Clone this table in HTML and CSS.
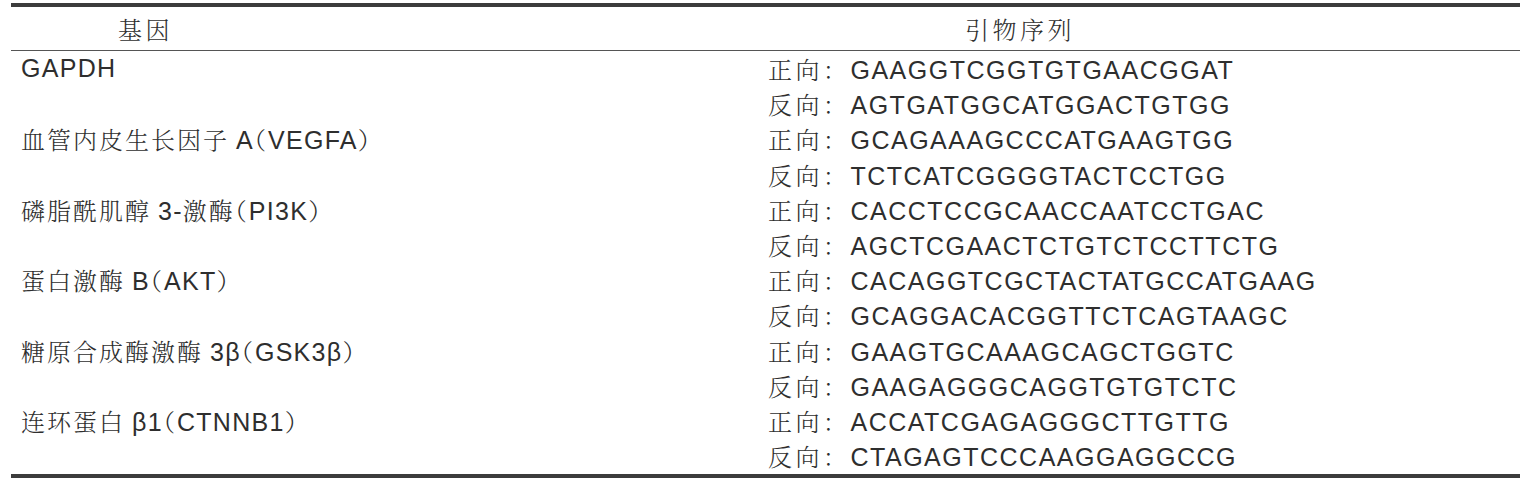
FILE: index.html
```html
<!DOCTYPE html>
<html lang="zh">
<head>
<meta charset="utf-8">
<link rel="stylesheet" href="styles.css">
</head>
<body>
<div class="table">
  <div class="head">
    <div class="h1 cn">基因</div>
    <div class="h2 cn">引物序列</div>
  </div>
  <div class="body">
    <div class="gene">GAPDH</div>
    <div class="primers">
      <div class="line"><span class="cn">正向：</span><span class="seq">GAAGGTCGGTGTGAACGGAT</span></div>
      <div class="line"><span class="cn">反向：</span><span class="seq">AGTGATGGCATGGACTGTGG</span></div>
    </div>

    <div class="gene"><span class="cn gap">血管内皮生长因子</span>A<span class="cn p">（</span>VEGFA<span class="cn p">）</span></div>
    <div class="primers">
      <div class="line"><span class="cn">正向：</span><span class="seq">GCAGAAAGCCCATGAAGTGG</span></div>
      <div class="line"><span class="cn">反向：</span><span class="seq">TCTCATCGGGGTACTCCTGG</span></div>
    </div>

    <div class="gene"><span class="cn gap">磷脂酰肌醇</span>3-<span class="cn">激酶</span><span class="cn p">（</span>PI3K<span class="cn p">）</span></div>
    <div class="primers">
      <div class="line"><span class="cn">正向：</span><span class="seq">CACCTCCGCAACCAATCCTGAC</span></div>
      <div class="line"><span class="cn">反向：</span><span class="seq">AGCTCGAACTCTGTCTCCTTCTG</span></div>
    </div>

    <div class="gene"><span class="cn gap">蛋白激酶</span>B<span class="cn p">（</span>AKT<span class="cn p">）</span></div>
    <div class="primers">
      <div class="line"><span class="cn">正向：</span><span class="seq">CACAGGTCGCTACTATGCCATGAAG</span></div>
      <div class="line"><span class="cn">反向：</span><span class="seq">GCAGGACACGGTTCTCAGTAAGC</span></div>
    </div>

    <div class="gene"><span class="cn gap">糖原合成酶激酶</span>3β<span class="cn p">（</span>GSK3β<span class="cn p">）</span></div>
    <div class="primers">
      <div class="line"><span class="cn">正向：</span><span class="seq">GAAGTGCAAAGCAGCTGGTC</span></div>
      <div class="line"><span class="cn">反向：</span><span class="seq">GAAGAGGGCAGGTGTGTCTC</span></div>
    </div>

    <div class="gene"><span class="cn gap">连环蛋白</span>β1<span class="cn p">（</span>CTNNB1<span class="cn p">）</span></div>
    <div class="primers">
      <div class="line"><span class="cn">正向：</span><span class="seq">ACCATCGAGAGGGCTTGTTG</span></div>
      <div class="line"><span class="cn">反向：</span><span class="seq">CTAGAGTCCCAAGGAGGCCG</span></div>
    </div>
  </div>
</div>
</body>
</html>
```
FILE: styles.css
```css
html, body {
  margin: 0;
  padding: 0;
  background: #fff;
}
body {
  color: #2e2e2e;
  font-family: "Liberation Sans", Arial, "Noto Serif CJK SC", "Noto Sans CJK SC", sans-serif;
  font-size: 25px;
}
.table {
  margin: 3px 1px 0 11px;
  border-top: 4px solid #3c3c3c;
  border-bottom: 4px solid #3c3c3c;
}
.cn {
  font-family: "Noto Serif CJK SC", "Noto Sans CJK SC", serif;
  font-size: 24px;
  font-weight: 300;
  letter-spacing: 3.5px;
}
.gene .cn {
  letter-spacing: 2px;
}
.gene .gap {
  margin-right: 7px;
}
.p {
  font-feature-settings: "halt";
  letter-spacing: 3px;
}
.head {
  display: flex;
  height: 43px;
  align-items: center;
  border-bottom: 1px solid #555;
}
.h1 {
  margin-left: 107px;
}
.h2 {
  margin-left: 792px;
}
.body {
  display: grid;
  grid-template-columns: 757px 1fr;
  padding-bottom: 1px;
}
.gene {
  padding-left: 10px;
  height: 35.2px;
  line-height: 35.2px;
  letter-spacing: 1.3px;
  white-space: nowrap;
}
.primers {
  display: flex;
  flex-direction: column;
}
.line {
  height: 35.2px;
  line-height: 35.2px;
  white-space: nowrap;
}
.seq {
  letter-spacing: 1.5px;
}
```
